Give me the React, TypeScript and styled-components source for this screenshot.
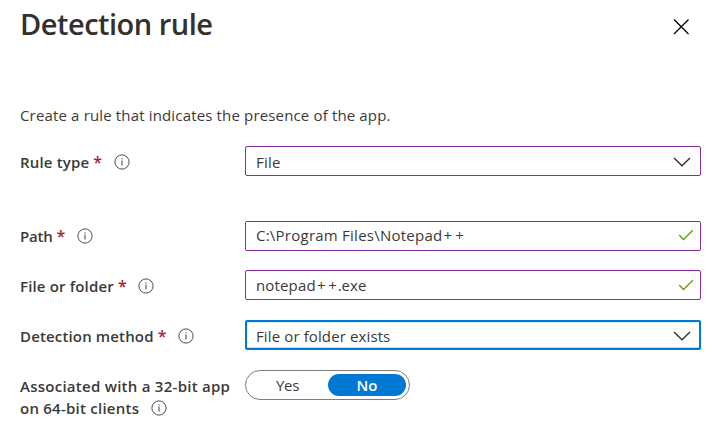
import React from "react";
import styled, { createGlobalStyle } from "styled-components";

const GlobalStyle = createGlobalStyle`
  * { box-sizing: border-box; }
  body {
    margin: 0;
    background: #fff;
    color: #3b3a39;
    font-family: "Open Sans", "Noto Sans", sans-serif;
    font-size: 15px;
    overflow: hidden;
  }
`;

const Panel = styled.main`
  width: 712px;
  height: 421px;
  padding: 0 11px 0 20px;
  background: #fff;
`;

const Header = styled.header`
  display: flex;
  justify-content: space-between;
  align-items: flex-start;
  height: 105px;
`;

const Title = styled.h1`
  margin: 4px 0 0;
  color: #323130;
  font-size: 29px;
  line-height: 40px;
  font-weight: 600;
  white-space: nowrap;
`;

const CloseButton = styled.button`
  display: flex;
  margin: 19px 12px 0 0;
  padding: 0;
  border: 0;
  background: none;
  color: #000;
`;

const Intro = styled.p`
  height: 41px;
  margin: 0;
  line-height: 20px;
  white-space: nowrap;
`;

const Row = styled.div<{ $height: number }>`
  display: grid;
  grid-template-columns: 225px 456px;
  align-items: start;
  height: ${(p) => p.$height}px;
`;

const Label = styled.label<{ $top?: number }>`
  padding-top: ${(p) => p.$top ?? 5}px;
  font-weight: 600;
  line-height: 22px;
  white-space: nowrap;
`;

const Words = styled.span<{ $spacing?: number }>`
  letter-spacing: ${(p) => p.$spacing ?? 0}px;
`;

const Required = styled.span`
  margin-left: 4px;
  color: #a4262c;
  font-size: 16px;
  line-height: 1;
`;

const InfoIcon = styled.svg`
  width: 16px;
  height: 16px;
  margin-left: 11.5px;
  vertical-align: -2px;
`;

const Field = styled.div<{ $focused?: boolean; $checked?: boolean; $drop?: number; $lift?: number }>`
  display: flex;
  align-items: center;
  justify-content: space-between;
  height: 30px;
  padding: ${(p) => p.$drop ?? 0}px ${(p) => (p.$checked ? 6 : p.$focused ? 8 : 9)}px
    ${(p) => p.$lift ?? 0}px ${(p) => (p.$focused ? 9 : 10)}px;
  border: ${(p) => (p.$focused ? "2px solid #0078d4" : "1px solid #8a2da5")};
  border-radius: 2px;
  box-shadow: ${(p) => (p.$focused ? "inset 0 -1px 0 #b9dbf4, inset 0 1px 0 #d9ecf9" : "none")};
  white-space: nowrap;
`;

const Toggle = styled.div`
  display: flex;
  width: 165px;
  height: 30px;
  padding: 3px;
  border: 1px solid #807e7b;
  border-radius: 15px;
`;

const Option = styled.button<{ $selected?: boolean }>`
  width: ${(p) => (p.$selected ? 78 : 79)}px;
  height: 22px;
  padding: 0 ${(p) => (p.$selected ? 0 : 2)}px 0 0;
  border: 0;
  border-radius: 11px;
  background: ${(p) => (p.$selected ? "#0078d4" : "transparent")};
  color: ${(p) => (p.$selected ? "#fff" : "#3b3a39")};
  font: inherit;
  font-weight: ${(p) => (p.$selected ? 600 : 400)};
  line-height: 22px;
`;

const Info = () => (
  <InfoIcon viewBox="0 0 16 16" fill="none" stroke="#3b3a39">
    <circle cx="8" cy="8" r="7.1" strokeWidth=".9" />
    <path d="M8 6.5V11.5M8 4.3V5.4" strokeWidth="1" />
  </InfoIcon>
);

const Chevron = () => (
  <svg width="18" height="10" viewBox="0 0 18 10" fill="none" stroke="#323130" strokeWidth="1.4">
    <path d="M1 1L9 8.7L17 1" />
  </svg>
);

const Check = () => (
  <svg width="16" height="12" viewBox="0 0 16 12" fill="none" stroke="#57a300" strokeWidth="1.3">
    <path d="M1.2 6L5.5 10.5L14.8 1.2" />
  </svg>
);

export default function App() {
  return (
    <>
      <GlobalStyle />
      <Panel>
        <Header>
          <Title><Words $spacing={-0.5}>Detection rule</Words></Title>
          <CloseButton aria-label="Close">
            <svg width="16" height="16" viewBox="0 0 16 16" stroke="currentColor" strokeWidth="1.3">
              <path d="M1 .5L15.5 15M15.5 .5L1 15" />
            </svg>
          </CloseButton>
        </Header>
        <Intro><Words $spacing={0.155}>Create a rule that indicates the presence of the app.</Words></Intro>
        <Row $height={75}>
          <Label><Words $spacing={0.17}>Rule type</Words><Required>*</Required><Info /></Label>
          <Field $drop={1}><Words $spacing={0.25}>File</Words><Chevron /></Field>
        </Row>
        <Row $height={49}>
          <Label $top={4}><Words $spacing={-0.2}>Path</Words><Required>*</Required><Info /></Label>
          <Field $checked $lift={2}>
            <span><Words $spacing={0.24}>C:\Program Files\Notepa</Words><Words $spacing={1.4}>d</Words><Words $spacing={3.2}>++</Words></span>
            <Check />
          </Field>
        </Row>
        <Row $height={50}>
          <Label><Words $spacing={0.16}>File or folder</Words><Required>*</Required><Info /></Label>
          <Field $checked>
            <span>
              <Words $spacing={0.15}>notepa</Words><Words $spacing={1.3}>d</Words><Words $spacing={2.8}>+</Words><Words $spacing={0.8}>+</Words><Words>.exe</Words>
            </span>
            <Check />
          </Field>
        </Row>
        <Row $height={50}>
          <Label><Words $spacing={0.15}>Detection method</Words><Required>*</Required><Info /></Label>
          <Field $focused $drop={1}><Words $spacing={0.12}>File or folder exists</Words><Chevron /></Field>
        </Row>
        <Row $height={51}>
          <Label>
            <Words $spacing={0.26}>Associated with a 32-bit app</Words><br />
            <Words $spacing={0.24}>on 64-bit clients</Words><Info />
          </Label>
          <Toggle>
            <Option><Words $spacing={-0.3}>Yes</Words></Option>
            <Option $selected><Words>No</Words></Option>
          </Toggle>
        </Row>
      </Panel>
    </>
  );
}
